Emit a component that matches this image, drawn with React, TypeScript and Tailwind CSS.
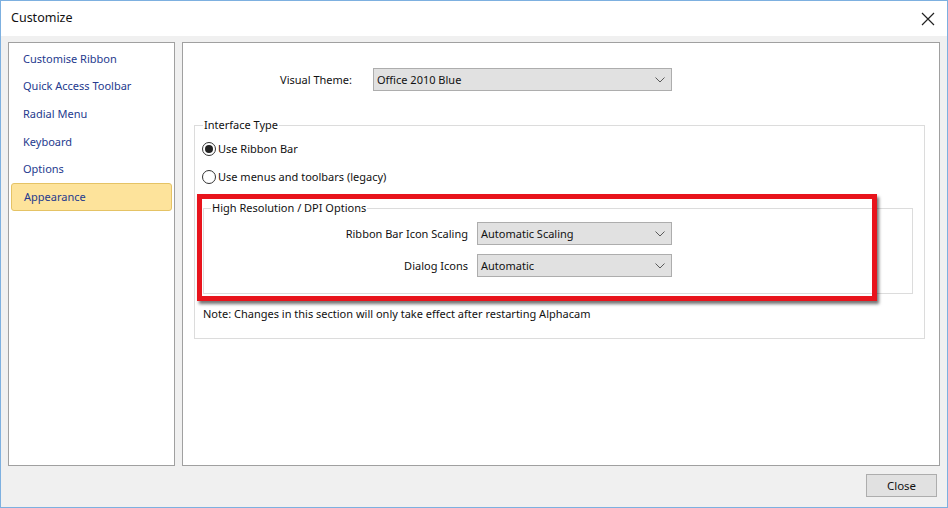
import React from 'react'

const font = { fontFamily: '"Noto Sans", "Open Sans", sans-serif' }

function Chevron() {
  return (
    <svg width="10" height="6" viewBox="0 0 10 6" className="shrink-0">
      <polyline points="0.5,0.5 5,5 9.5,0.5" fill="none" stroke="#5a5a5a" strokeWidth="1" />
    </svg>
  )
}

function Select({ value, className }: { value: string; className: string }) {
  return (
    <div
      className={
        'flex h-[23px] items-center justify-between border border-[#adadad] bg-[#e1e1e1] pl-[3px] pr-[6px] text-[11px] leading-[16px] text-[#111] ' +
        className
      }
    >
      <span>{value}</span>
      <Chevron />
    </div>
  )
}

function Radio({ checked, label }: { checked?: boolean; label: string }) {
  return (
    <div className="flex h-[16px] items-center gap-[2px] text-[11px] leading-[16px] text-[#111]">
      <span className="flex h-[14px] w-[14px] items-center justify-center rounded-full border border-[#333] bg-white">
        {checked && <span className="h-[8px] w-[8px] rounded-full bg-[#222]" />}
      </span>
      <span>{label}</span>
    </div>
  )
}

const navItems = [
  'Customise Ribbon',
  'Quick Access Toolbar',
  'Radial Menu',
  'Keyboard',
  'Options',
  'Appearance',
]

export default function App() {
  return (
    <div
      className="flex h-[508px] w-[948px] flex-col overflow-hidden border border-[#7db0e0] bg-[#f0f0f0]"
      style={font}
    >
      {/* title bar */}
      <div className="flex h-[35px] shrink-0 items-center justify-between bg-white pl-[10px] pr-[12px]">
        <span className="text-[12.5px] text-[#111]">Customize</span>
        <svg width="14" height="14" viewBox="0 0 14 14">
          <path d="M1 1 L13 13 M13 1 L1 13" stroke="#222" strokeWidth="1.2" />
        </svg>
      </div>

      <div className="flex flex-1 flex-col px-[7px] pt-[6px]">
        <div className="flex h-[424px] gap-[7px]">
          {/* left nav */}
          <div className="w-[167px] border border-[#a0a0a0] bg-white px-[2px] pt-[2px]">
            {navItems.map((item) => (
              <div
                key={item}
                className={
                  'flex h-[27.6px] items-center rounded-[3px] pl-[12px] text-[11px] leading-[16px] text-[#253a8e] ' +
                  (item === 'Appearance' ? 'border border-[#e5c365] bg-[#fde39b] pl-[11px] text-[#2a2a3a]' : '')
                }
              >
                {item}
              </div>
            ))}
          </div>

          {/* right panel */}
          <div className="relative flex-1 border border-[#a0a0a0] bg-white pl-[11px] pr-[14px] pt-[25px]">
            <div className="flex items-center">
              <span className="w-[179px] pr-[21px] text-right text-[11px] leading-[16px] text-[#111]">Visual Theme:</span>
              <Select value="Office 2010 Blue" className="w-[299px]" />
            </div>

            <fieldset className="mt-[26px] h-[222px] border border-[#dcdcdc] px-[8px]">
              <legend className="px-[1px] text-[11px] leading-[16px] text-[#111]">Interface Type</legend>
              <div className="-ml-[1px] mt-[8px] flex flex-col gap-[12px]">
                <Radio checked label="Use Ribbon Bar" />
                <Radio label="Use menus and toolbars (legacy)" />
              </div>

              <fieldset className="mt-[15px] h-[94px] w-[710px] border border-[#dcdcdc] px-[7px]">
                <legend className="px-[1px] text-[11px] leading-[16px] text-[#111]">High Resolution / DPI Options</legend>
                <div className="mt-[6px] flex flex-col gap-[9px]">
                  <div className="flex items-center">
                    <span className="w-[266px] pr-[9px] text-right text-[11px] leading-[16px] text-[#111]">Ribbon Bar Icon Scaling</span>
                    <Select value="Automatic Scaling" className="w-[195px]" />
                  </div>
                  <div className="flex items-center">
                    <span className="w-[266px] pr-[9px] text-right text-[11px] leading-[16px] text-[#111]">Dialog Icons</span>
                    <Select value="Automatic" className="w-[195px]" />
                  </div>
                </div>
              </fieldset>

              <div className="mt-[12px] text-[11px] leading-[16px] text-[#111]">
                Note: Changes in this section will only take effect after restarting Alphacam
              </div>
            </fieldset>

            {/* red annotation */}
            <div className="pointer-events-none absolute left-[14px] top-[151px] h-[107px] w-[680px] border-[5px] border-[#e8141c] shadow-[2px_3px_3px_rgba(0,0,0,0.55)]" />
          </div>
        </div>

        <div className="flex justify-end pr-[3px] pt-[8px]">
          <button className="h-[23px] w-[71px] border border-[#adadad] bg-[#e1e1e1] text-[11.5px] text-[#111]">
            Close
          </button>
        </div>
      </div>
    </div>
  )
}
